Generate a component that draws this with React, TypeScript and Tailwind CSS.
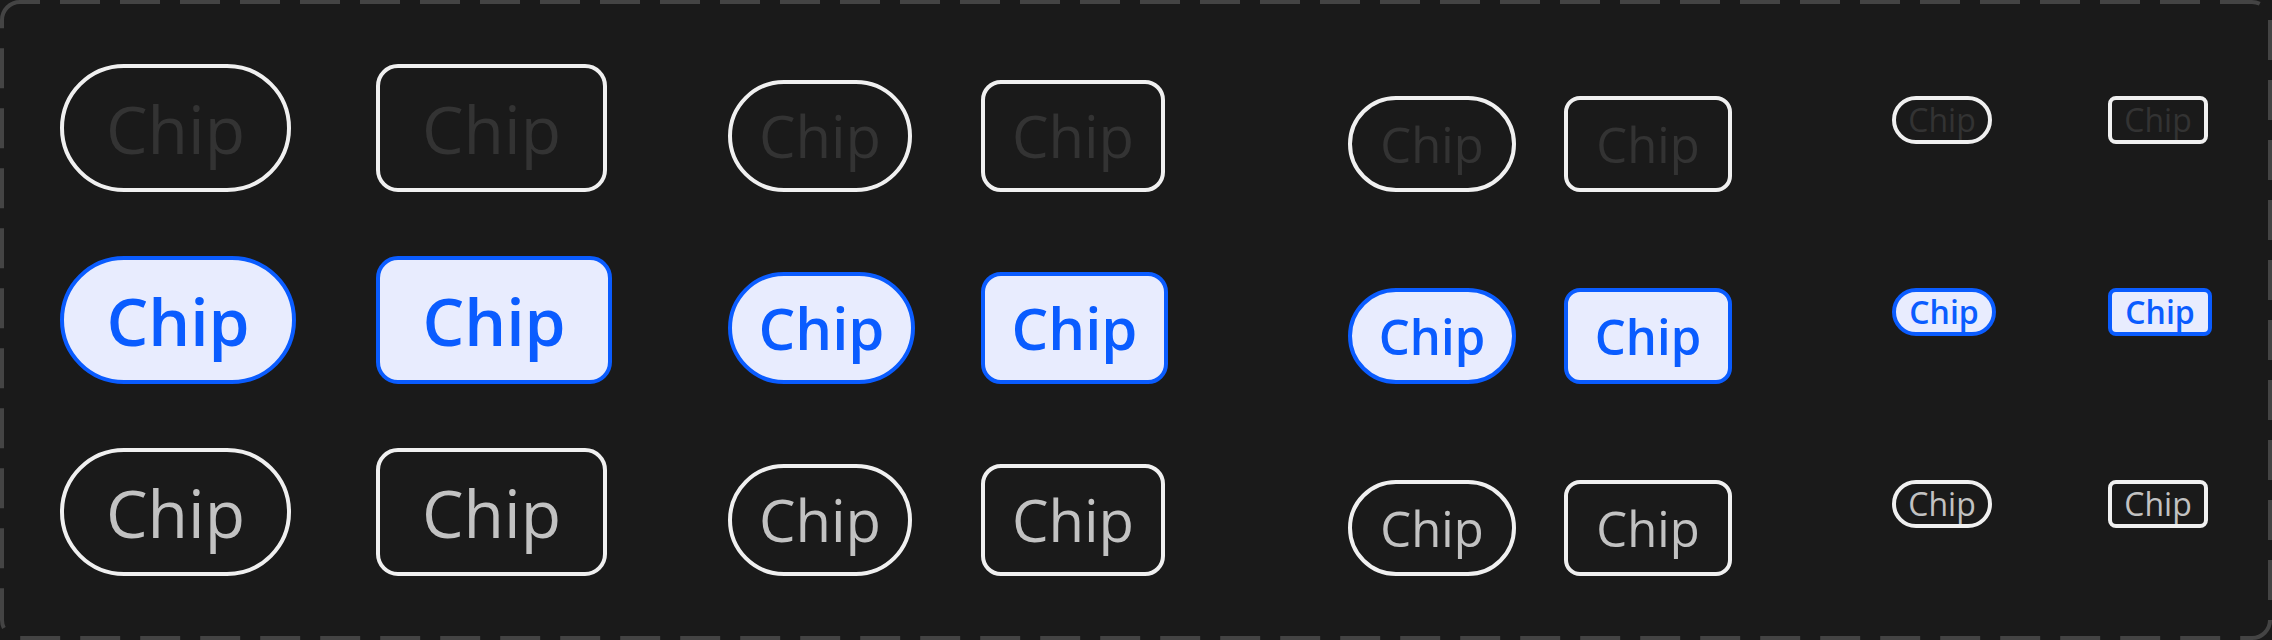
const groups = [
    {
        id: "xl",
        cols: "grid-cols-[316px_352px]",
        chip: "h-[128px] text-[66px]",
        wide: "w-[231px]",
        wideSel: "w-[236px]",
        square: "rounded-[22px]",
        spacing: "",
    },
    {
        id: "lg",
        cols: "grid-cols-[253px_367px]",
        chip: "h-[112px] text-[58px]",
        wide: "w-[184px]",
        wideSel: "w-[187px]",
        square: "rounded-[20px]",
        spacing: "",
    },
    {
        id: "md",
        cols: "grid-cols-[216px_328px]",
        chip: "h-[96px] text-[49px]",
        wide: "w-[168px]",
        wideSel: "w-[168px]",
        square: "rounded-[16px]",
        spacing: "",
    },
    {
        id: "sm",
        cols: "grid-cols-[216px_160px]",
        chip: "h-[48px] text-[32px]",
        wide: "w-[100px]",
        wideSel: "w-[104px]",
        square: "rounded-[8px]",
        spacing: "mb-[48px]",
    },
];

const states = ["disabled", "selected", "default"] as const;
const shapes = ["pill", "square"] as const;

type Group = (typeof groups)[number];

const Chip = ({ group, state, shape }: { group: Group; state: (typeof states)[number]; shape: (typeof shapes)[number] }) => {
    const selected = state === "selected";
    const tone = selected
        ? "bg-[#e8ecfe] border-[#0a5cff] text-[#0a5cff] font-semibold"
        : state === "disabled"
            ? "border-[#f0f0f0] text-[#333333]"
            : "border-[#f0f0f0] text-[#c2c2c2]";
    return (
        <div
            className={`flex items-center justify-center border-4 leading-none ${group.chip} ${group.spacing} ${selected ? group.wideSel : group.wide} ${shape === "pill" ? "rounded-full" : group.square} ${tone}`}
        >
            Chip
        </div>
    );
};

export default function App() {
    return (
        <div className="w-[2272px] h-[640px] bg-[#1a1a1a] font-['Open_Sans','Noto_Sans',sans-serif]">
            <div className="relative w-full h-full flex pl-[60px]">
                <svg className="absolute inset-0 pointer-events-none" width="2272" height="640">
                    <rect
                        x="2"
                        y="2"
                        width="2268"
                        height="636"
                        rx="18"
                        fill="none"
                        stroke="#444444"
                        strokeWidth="4"
                        strokeDasharray="40 20"
                        strokeDashoffset="20"
                    />
                </svg>
                {groups.map((group) => (
                    <div key={group.id} className={`grid ${group.cols} grid-rows-[192px_192px_192px] items-end justify-items-start`}>
                        {states.map((state) =>
                            shapes.map((shape) => (
                                <Chip key={state + shape} group={group} state={state} shape={shape} />
                            ))
                        )}
                    </div>
                ))}
            </div>
        </div>
    );
}
